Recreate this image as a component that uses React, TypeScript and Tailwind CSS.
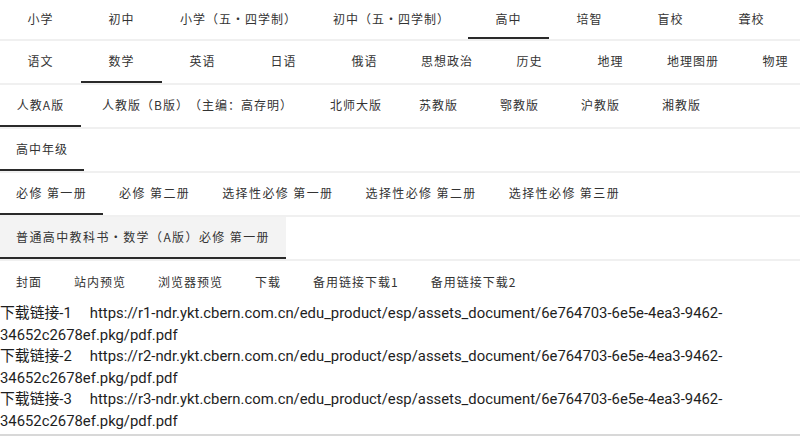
import { Fragment } from 'react';

interface Tab {
  label: string;
  pad?: string;
}

const stages: Tab[] = [
  { label: '小学' },
  { label: '初中' },
  { label: '小学（五•四学制）', pad: 'px-[18px]' },
  { label: '初中（五•四学制）', pad: 'px-[18px]' },
  { label: '高中' },
  { label: '培智' },
  { label: '盲校' },
  { label: '聋校' },
];
const subjects: Tab[] = ['语文', '数学', '英语', '日语', '俄语', '思想政治', '历史', '地理', '地理图册', '物理'].map(label => ({ label }));
const editions: Tab[] = [
  { label: '人教A版' },
  { label: '人教版（B版）（主编：高存明）', pad: 'px-[21px]' },
  { label: '北师大版' },
  { label: '苏教版' },
  { label: '鄂教版' },
  { label: '沪教版' },
  { label: '湘教版' },
];
const grades: Tab[] = [{ label: '高中年级' }];
const volumes: Tab[] = ['必修 第一册', '必修 第二册', '选择性必修 第一册', '选择性必修 第二册', '选择性必修 第三册'].map(label => ({ label }));
const books: Tab[] = [{ label: '普通高中教科书·数学（A版）必修 第一册' }];
const actions = ['封面', '站内预览', '浏览器预览', '下载', '备用链接下载1', '备用链接下载2'];

const links = [
  'https://r1-ndr.ykt.cbern.com.cn/edu_product/esp/assets_document/6e764703-6e5e-4ea3-9462-',
  'https://r2-ndr.ykt.cbern.com.cn/edu_product/esp/assets_document/6e764703-6e5e-4ea3-9462-',
  'https://r3-ndr.ykt.cbern.com.cn/edu_product/esp/assets_document/6e764703-6e5e-4ea3-9462-',
];

interface TabRowProps {
  items: Tab[];
  active: number;
  height?: string;
  tracking?: string;
  shaded?: boolean;
}

function TabRow({ items, active, height = 'h-[42px]', tracking = 'tracking-[1px]', shaded }: TabRowProps) {
  return (
    <div className={`flex border-b-2 border-[#f0f0f0] overflow-hidden ${tracking}`}>
      {items.map((item, i) => (
        <div
          key={item.label}
          className={`${height} min-w-[81px] ${item.pad ?? 'px-4'} shrink-0 flex items-center justify-center whitespace-nowrap border-b-2 ${
            i === active ? 'border-[#2a2a2a]' : 'border-transparent'
          } ${shaded && i === active ? 'bg-[#f3f3f3]' : ''}`}
        >
          {item.label}
        </div>
      ))}
    </div>
  );
}

export default function App() {
  return (
    <div
      lang="zh-CN"
      className="w-[800px] h-[437px] bg-white overflow-hidden text-[#333] text-[12px] tracking-[1px] [text-spacing-trim:space-all]"
      style={{ fontFamily: '"Noto Sans CJK SC", "Noto Sans", sans-serif' }}
    >
      <TabRow items={stages} active={4} height="h-[39px]" />
      <TabRow items={subjects} active={1} />
      <TabRow items={editions} active={0} />
      <TabRow items={grades} active={0} />
      <TabRow items={volumes} active={0} tracking="tracking-[1.4px]" />
      <TabRow items={books} active={0} tracking="tracking-[1.4px]" shaded />

      <div className="flex h-[42px]">
        {actions.map(a => (
          <div key={a} className="px-4 flex items-center whitespace-nowrap">
            {a}
          </div>
        ))}
      </div>

      <div
        className="text-[14.85px] leading-[21.5px] tracking-normal text-[#1e1e1e] border-b-2 border-[#d8d8d8] pb-[2px]"
        style={{ fontFamily: 'Roboto, "Noto Sans CJK SC", sans-serif' }}
      >
        {links.map((url, i) => (
          <Fragment key={url}>
            <div>
              <span className="mr-[18px]">下载链接-{i + 1}</span>
              {url}
              <wbr />
              34652c2678ef.pkg/pdf.pdf
            </div>
          </Fragment>
        ))}
      </div>
    </div>
  );
}
